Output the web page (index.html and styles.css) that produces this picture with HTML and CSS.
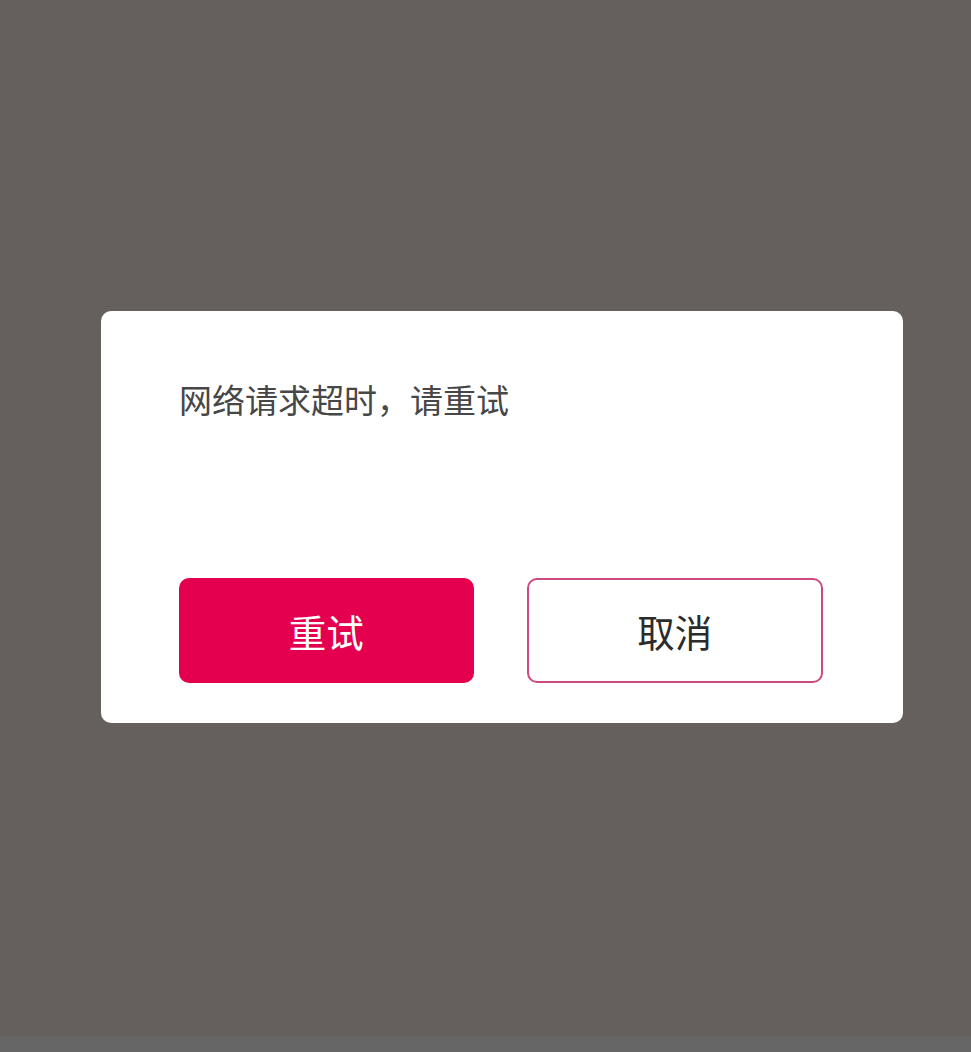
FILE: index.html
```html
<!DOCTYPE html>
<html lang="zh-CN">
<head>
    <meta charset="UTF-8">
    <meta name="viewport" content="width=device-width, initial-scale=1.0">
    <title>网络请求超时</title>
    <link rel="stylesheet" href="styles.css">
</head>
<body>
    <div class="overlay">
        <div class="dialog">
            <p class="dialog-message">网络请求超时，请重试</p>
            <div class="dialog-actions">
                <button type="button" class="btn btn-primary">重试</button>
                <button type="button" class="btn btn-outline">取消</button>
            </div>
        </div>
    </div>
    <div class="bottom-bar"></div>
</body>
</html>
```

FILE: styles.css
```css
html, body {
    height: 100%;
}

body {
    margin: 0;
    display: flex;
    flex-direction: column;
    font-family: "Noto Sans CJK SC", "Noto Sans", sans-serif;
    background-color: #666666;
}

.overlay {
    flex: 1;
    display: flex;
    align-items: center;
    background-color: #655f5e;
    padding-left: 101px;
    padding-bottom: 2px;
}

.bottom-bar {
    height: 16px;
    background-color: #666666;
}

.dialog {
    width: 802px;
    box-sizing: border-box;
    background: #fff;
    border-radius: 10px;
    padding: 66px 80px 40px 78px;
}

.dialog-message {
    margin: 0;
    font-size: 33px;
    line-height: 44px;
    color: #474747;
    height: 201px;
}

.dialog-actions {
    display: flex;
    gap: 53px;
}

.btn {
    width: 295px;
    height: 105px;
    box-sizing: border-box;
    border-radius: 10px;
    font-family: inherit;
    font-size: 37.5px;
    cursor: pointer;
    padding: 0;
}

.btn-primary {
    background-color: #e4004f;
    color: #fff;
    border: none;
}

.btn-outline {
    width: 297px;
    background-color: #fff;
    color: #2b2b2b;
    border: 2px solid #cc4a80;
}
```
